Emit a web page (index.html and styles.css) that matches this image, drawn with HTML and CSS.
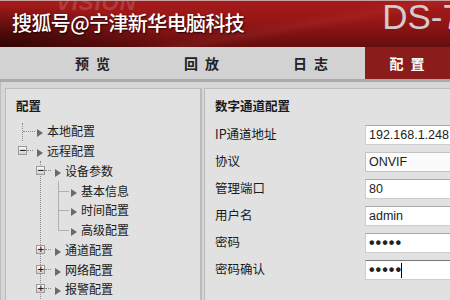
FILE: index.html
```html
<!DOCTYPE html>
<html lang="zh-CN">
<head>
    <meta charset="UTF-8">
    <title>配置</title>
    <link rel="stylesheet" href="styles.css">
</head>
<body>
    <header class="banner">
        <span class="brand">VISION</span>
        <h1 class="watermark">搜狐号@宁津新华电脑科技</h1>
        <span class="model">DS-7</span>
    </header>

    <nav class="tabs">
        <a class="tab">预览</a>
        <a class="tab">回放</a>
        <a class="tab">日志</a>
        <a class="tab active">配置</a>
    </nav>
    <div class="strip"></div>

    <main class="content">
        <section class="panel side">
            <h2 class="panel-title">配置</h2>
            <ul class="tree">
                <li class="node first"><span class="joint line"></span><span class="arrow"></span>本地配置</li>
                <li class="node"><span class="joint"><span class="box">−</span></span><span class="arrow"></span>远程配置
                    <ul class="branch">
                        <li class="node"><span class="joint"><span class="box">−</span></span><span class="arrow"></span>设备参数
                            <ul class="leaves">
                                <li class="leaf"><span class="joint line"></span><span class="arrow"></span>基本信息</li>
                                <li class="leaf"><span class="joint line"></span><span class="arrow"></span>时间配置</li>
                                <li class="leaf last"><span class="joint line"></span><span class="arrow"></span>高级配置</li>
                            </ul>
                        </li>
                        <li class="node"><span class="joint"><span class="box">+</span></span><span class="arrow"></span>通道配置</li>
                        <li class="node"><span class="joint"><span class="box">+</span></span><span class="arrow"></span>网络配置</li>
                        <li class="node"><span class="joint"><span class="box">+</span></span><span class="arrow"></span>报警配置</li>
                    </ul>
                </li>
            </ul>
        </section>

        <section class="panel main">
            <h2 class="panel-title">数字通道配置</h2>
            <div class="form">
                <label>IP通道地址</label>
                <div class="field">192.168.1.248</div>
                <label>协议</label>
                <div class="field select">ONVIF</div>
                <label>管理端口</label>
                <div class="field">80</div>
                <label>用户名</label>
                <div class="field">admin</div>
                <label>密码</label>
                <div class="field dots">•••••</div>
                <label>密码确认</label>
                <div class="field dots focus">•••••<span class="caret"></span></div>
            </div>
        </section>
    </main>
</body>
</html>
```

FILE: styles.css
```css
body {
    margin: 0;
    width: 450px;
    height: 300px;
    overflow: hidden;
    background: #d6d6d6;
    font-family: "Noto Sans CJK SC", "Liberation Sans", sans-serif;
    color: #1a1a1a;
}

/* banner */
.banner {
    height: 47px;
    display: flex;
    align-items: flex-start;
    overflow: hidden;
    background:
        radial-gradient(ellipse 170px 42px at 0% 100%, rgba(40, 4, 4, 0.85), rgba(40, 4, 4, 0) 100%),
        linear-gradient(170deg, rgba(255, 255, 255, 0) 55%, rgba(255, 120, 120, 0.08) 62%, rgba(255, 255, 255, 0) 68%),
        linear-gradient(180deg, #a51b1b 0%, #961616 45%, #640e0e 100%);
    border-top: 1px solid #c9a0a0;
    box-sizing: border-box;
}

.brand {
    width: 0;
    margin-left: 56px;
    margin-top: -11px;
    font-family: "Liberation Sans", sans-serif;
    font-size: 22px;
    font-weight: bold;
    font-style: italic;
    letter-spacing: 1px;
    color: #b03c3c;
    white-space: nowrap;
}

.watermark {
    margin: 7px 0 0 -44px;
    font-size: 20px;
    font-weight: 500;
    letter-spacing: -0.6px;
    color: #fff;
    text-shadow: 1px 1px 2px rgba(0, 0, 0, 0.8);
    white-space: nowrap;
}

.model {
    margin-left: auto;
    margin-right: -12px;
    margin-top: -4px;
    font-family: "Liberation Sans", sans-serif;
    font-size: 35px;
    color: #d2cccc;
    white-space: nowrap;
}

/* nav tabs */
.tabs {
    height: 32px;
    display: flex;
    padding-left: 38px;
    background: #d2d2d2;
    overflow: hidden;
}

.tab {
    flex: 0 0 109px;
    display: flex;
    align-items: center;
    justify-content: center;
    font-size: 14px;
    font-weight: bold;
    letter-spacing: 7px;
    text-indent: 7px;
    color: #222;
}

.tab.active {
    flex-basis: 84px;
    padding-right: 25px;
    flex-shrink: 0;
    background: #8a1c1c;
    color: #fff;
}

.strip {
    height: 3px;
    background: #ababab;
}

/* panels */
.content {
    display: grid;
    grid-template-columns: 197px 1fr;
    gap: 2px;
    padding: 6px 0 0 4px;
    border-left: 1px solid #bdbdbd;
    box-sizing: border-box;
    width: 450px;
}

.panel {
    height: 202px;
    overflow: hidden;
    background: #e1e1e1;
    border: 1px solid #bcbcbc;
    border-bottom: none;
    border-right-width: 2px;
    padding: 9px 0 0 10px;
}

.panel.main {
    border-right: none;
}

.panel-title {
    margin: 0;
    font-size: 12.5px;
    font-weight: bold;
    line-height: 16px;
}

/* tree */
.tree, .tree ul {
    list-style: none;
    margin: 0;
    padding: 0;
}

.tree {
    margin-top: 7px;
    margin-left: 6px;
    font-size: 12px;
}

.tree li {
    line-height: 19.75px;
    white-space: nowrap;
}

.joint {
    display: inline-block;
    position: relative;
    width: 15px;
    height: 19.75px;
    vertical-align: top;
}

.joint.line::after {
    content: "";
    position: absolute;
    left: 0;
    right: 2px;
    top: 10px;
    border-top: 1px dotted #8a8a8a;
}

.first .joint.line {
    border-left: 1px dotted #8a8a8a;
    height: 18px;
    margin-top: 2px;
    box-sizing: border-box;
}

.first .joint.line::after {
    top: 8px;
}

.box {
    position: absolute;
    left: -4px;
    top: 5px;
    width: 9px;
    height: 9px;
    box-sizing: border-box;
    border: 1px solid #9a9a9a;
    background: linear-gradient(#fafafa, #cfcfcf);
    font-family: "DejaVu Sans", sans-serif;
    font-size: 9px;
    font-weight: bold;
    line-height: 7px;
    text-align: center;
    color: #222;
}

.box::after {
    content: "";
    position: absolute;
    left: 8px;
    top: 3px;
    width: 6px;
    border-top: 1px dotted #8a8a8a;
}

.arrow {
    display: inline-block;
    width: 0;
    height: 0;
    margin: 0 4px 0 0;
    border-left: 6px solid #6a6a6a;
    border-top: 4.5px solid transparent;
    border-bottom: 4.5px solid transparent;
    vertical-align: -1px;
}

.branch {
    margin-left: 18px !important;
    border-left: 1px dotted #8a8a8a;
    height: 140px;
}

.branch > li > .joint {
    width: 14px;
}

.branch > li > .joint .box {
    left: -5px;
}

.leaves {
    margin-left: 17px !important;
}

.leaf .joint {
    width: 13px;
    border-left: 1px solid #b0b0b0;
    box-sizing: border-box;
}

.leaf .joint.line::after {
    border-top: 1px solid #b0b0b0;
}

.leaf.last .joint {
    height: 11px;
}

/* form */
.form {
    display: grid;
    grid-template-columns: 150px 1fr;
    grid-auto-rows: 27px;
    margin-top: 11px;
}

.form label {
    font-size: 12.5px;
    line-height: 16px;
    padding-top: 1px;
}

.field {
    height: 20px;
    width: 100px;
    box-sizing: border-box;
    padding-left: 3px;
    background: #fff;
    border: 1px solid #cdcdcd;
    border-top-color: #a8a8a8;
    font-family: "Liberation Sans", sans-serif;
    font-size: 12.5px;
    line-height: 18px;
    color: #222;
    white-space: nowrap;
}

.field.select {
    background: #fbfbfb;
    border-color: #c4c4c4;
}

.field.dots {
    font-size: 16px;
    font-weight: bold;
    letter-spacing: 1px;
}

.field.focus {
    border-top-color: #777;
}

.caret {
    display: inline-block;
    width: 1px;
    height: 15px;
    margin-left: -1px;
    background: #000;
    vertical-align: -3px;
}
```
